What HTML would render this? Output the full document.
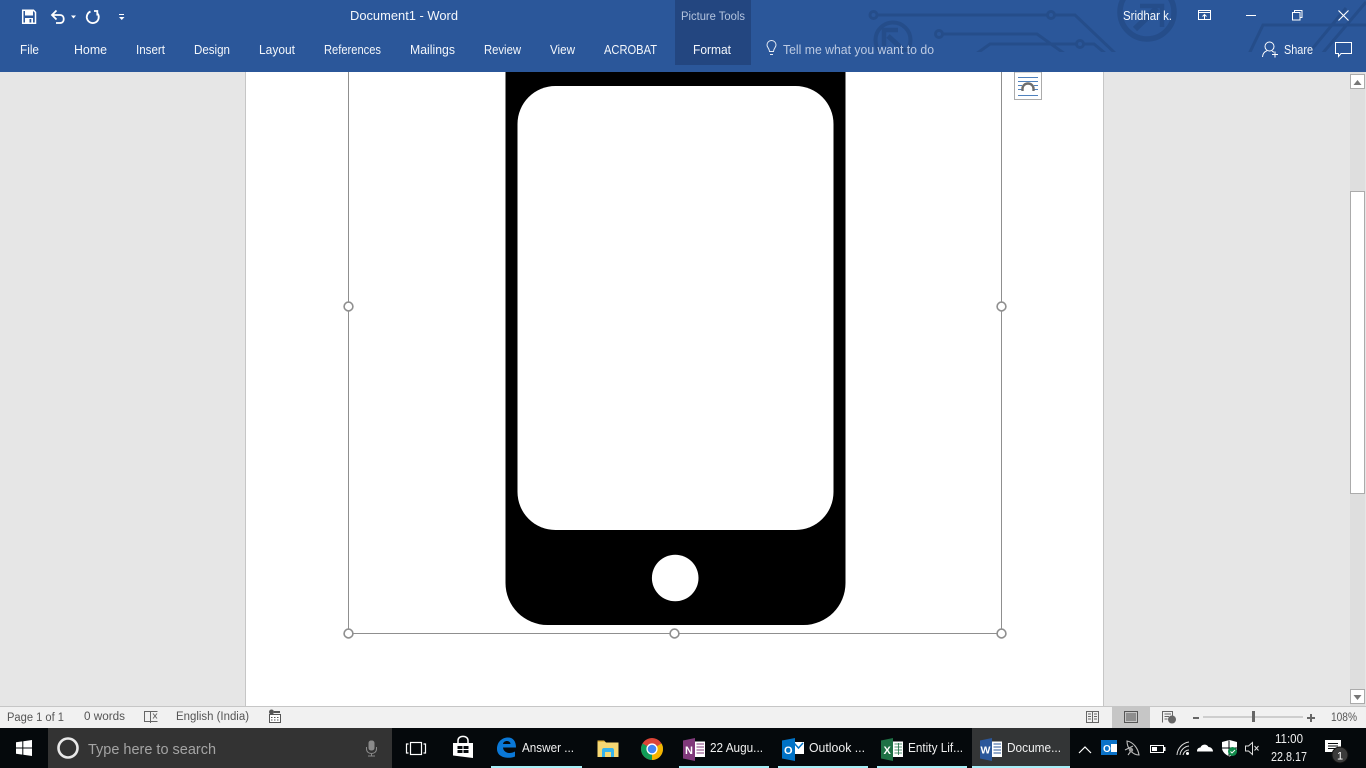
<!DOCTYPE html>
<html lang="en">
<head>
<meta charset="utf-8">
<title>Document1 - Word</title>
<style>
html,body{margin:0;padding:0;width:1366px;height:768px;overflow:hidden;background:#e6e6e6}
svg{display:block}
text{font-family:"Liberation Sans",sans-serif;font-size:12.5px}
.t{fill:#f4f7fb}
.s{fill:#555;font-size:11.5px}
.b{fill:#f0f0f0;font-size:13px}
</style>
</head>
<body>
<svg width="1366" height="768" viewBox="0 0 1366 768" xmlns="http://www.w3.org/2000/svg">
<defs>
<clipPath id="rb"><rect x="0" y="0" width="1366" height="52"/></clipPath>
<clipPath id="doc"><rect x="0" y="72" width="1366" height="634"/></clipPath>
</defs>

<!-- document area -->
<rect x="0" y="72" width="1366" height="635" fill="#e6e6e6"/>
<rect x="246" y="72" width="857" height="635" fill="#fff"/>
<rect x="245" y="72" width="1" height="635" fill="#c6c6c6"/>
<rect x="1103" y="72" width="1" height="635" fill="#c6c6c6"/>

<!-- scrollbar -->
<rect x="1350" y="72" width="15" height="634" fill="#dedede"/>
<rect x="1350.5" y="74.5" width="14" height="14" fill="#fff" stroke="#ababab"/>
<path d="M1353.5 85h8l-4-5z" fill="#777"/>
<rect x="1350.5" y="191.5" width="14" height="302" fill="#fff" stroke="#ababab"/>
<rect x="1350.5" y="689.5" width="14" height="14" fill="#fff" stroke="#ababab"/>
<path d="M1353.5 695h8l-4 5z" fill="#777"/>

<!-- phone image -->
<g clip-path="url(#doc)">
<rect x="505.5" y="20" width="340" height="605" rx="42" fill="#000"/>
<rect x="517.5" y="86" width="316" height="444" rx="38" fill="#fff"/>
<circle cx="675.2" cy="578" r="23.3" fill="#fff"/>
</g>

<!-- selection frame -->
<g fill="none" stroke="#8f8f8f" stroke-width="1">
<path d="M348.5 72V633.5H1001.5V72"/>
</g>
<g fill="#fff" stroke="#8f8f8f" stroke-width="1.6">
<circle cx="348.5" cy="306.5" r="4.4"/>
<circle cx="1001.5" cy="306.5" r="4.4"/>
<circle cx="348.5" cy="633.5" r="4.4"/>
<circle cx="674.5" cy="633.5" r="4.4"/>
<circle cx="1001.5" cy="633.5" r="4.4"/>
</g>

<!-- layout options button -->
<rect x="1014.5" y="72" width="27" height="27.5" fill="#fff" stroke="#ababab"/>
<g stroke="#4f81bd" stroke-width="1">
<path d="M1018 77.5h20M1018 81.500h20M1018 85.500h4M1034 85.500h4M1018 89.500h4M1034 89.500h4M1018 95.500h20"/>
</g>
<path d="M1022.500 91v-2.500a5.500 5 0 0 1 11 0V91" fill="none" stroke="#6e6e6e" stroke-width="2.400"/>

<!-- ribbon -->
<rect x="0" y="0" width="1366" height="72" fill="#2b579a"/>
<g clip-path="url(#rb)" fill="none" stroke="#254d8a" stroke-width="3">
<circle cx="873.500" cy="15" r="3.500"/>
<path d="M877 15H1047.500"/>
<circle cx="1051" cy="15" r="3.500"/>
<path d="M1054.500 15H1075L1117 55"/>
<circle cx="939" cy="34" r="3.500"/>
<path d="M942.500 34H1037L1065 54"/>
<path d="M976 54L990 44H1076.500"/>
<circle cx="1080" cy="44" r="3.500"/>
<path d="M1083.500 44H1094L1106 54"/>
<circle cx="893" cy="40" r="17.500" stroke-width="4"/>
<path d="M888 36L908 54" stroke-width="5"/>
<path d="M882 30H898M884 28V46" stroke-width="4.500"/>
<circle cx="1147" cy="12" r="27" stroke-width="5.500"/>
<path d="M1135 29L1157 8" stroke-width="6"/>
<path d="M1140 6H1162V27" stroke-width="4.500"/>
<path d="M1249 54L1263 25H1366" stroke-width="3"/>
<path d="M1308 54L1346 8" stroke-width="3"/>
<path d="M1322 54L1366 2" stroke-width="3"/>
</g>

<!-- Format tab -->
<rect x="675" y="0" width="76" height="65" fill="#234680"/>

<!-- QAT icons -->
<g fill="none" stroke="#fff">
<path d="M22.700 10.300H33.500L35.500 12.300V23.300H22.700Z" stroke-width="1.500"/>
<rect x="25" y="10.500" width="8" height="5" fill="#fff" stroke="none"/>
<rect x="25" y="18" width="8" height="5.500" fill="#fff" stroke="none"/>
<rect x="29.500" y="19" width="1.800" height="3.500" fill="#2b579a" stroke="none"/>
<path d="M52.500 15H60C65 15 65 23 60 23H56" stroke-width="1.800"/>
<path d="M56.500 10.500L52 15L56.500 19.500" stroke-width="1.800"/>
<path d="M90.500 11.500A6 6 0 1 0 97.800 13.800" stroke-width="1.800"/>
<path d="M94 11H97.300V15.500" stroke-width="1.800"/>
</g>
<path d="M71 15.500h5l-2.500 3z" fill="#fff"/>
<rect x="119" y="14" width="5" height="1" fill="#fff"/>
<path d="M119 17h5.500l-2.750 3z" fill="#fff"/>

<!-- Ribbon text -->
<text class="t" x="350" y="20" textLength="108" lengthAdjust="spacingAndGlyphs">Document1  -  Word</text>
<text x="681" y="20" textLength="64" lengthAdjust="spacingAndGlyphs" fill="#b4c4de" style="font-size:11.5px">Picture Tools</text>
<text class="t" x="1123" y="20" textLength="49" lengthAdjust="spacingAndGlyphs">Sridhar k.</text>
<text class="t" x="20" y="54" textLength="19" lengthAdjust="spacingAndGlyphs">File</text>
<text class="t" x="74" y="54" textLength="33" lengthAdjust="spacingAndGlyphs">Home</text>
<text class="t" x="136" y="54" textLength="29" lengthAdjust="spacingAndGlyphs">Insert</text>
<text class="t" x="194" y="54" textLength="36" lengthAdjust="spacingAndGlyphs">Design</text>
<text class="t" x="259" y="54" textLength="36" lengthAdjust="spacingAndGlyphs">Layout</text>
<text class="t" x="324" y="54" textLength="57" lengthAdjust="spacingAndGlyphs">References</text>
<text class="t" x="410" y="54" textLength="45" lengthAdjust="spacingAndGlyphs">Mailings</text>
<text class="t" x="484" y="54" textLength="37" lengthAdjust="spacingAndGlyphs">Review</text>
<text class="t" x="550" y="54" textLength="25" lengthAdjust="spacingAndGlyphs">View</text>
<text class="t" x="604" y="54" textLength="53" lengthAdjust="spacingAndGlyphs">ACROBAT</text>
<text class="t" x="693" y="54" textLength="38" lengthAdjust="spacingAndGlyphs">Format</text>
<text x="783" y="54" textLength="151" lengthAdjust="spacingAndGlyphs" fill="#bccae2">Tell me what you want to do</text>
<text class="t" x="1284" y="54" textLength="29" lengthAdjust="spacingAndGlyphs" style="font-size:13px">Share</text>

<!-- lightbulb -->
<g fill="none" stroke="#e4eaf4" stroke-width="1">
<path d="M769.500 51.500C769.500 48.500 767 47.500 767 45A4.500 4.500 0 0 1 776 45C776 47.500 773.500 48.500 773.500 51.500Z"/>
<path d="M770 54.500H773"/>
</g>

<!-- window controls -->
<g fill="none" stroke="#fff" stroke-width="1">
<rect x="1198.500" y="10.500" width="12" height="9"/>
<path d="M1198.500 12.500H1210.500"/>
<path d="M1204.500 19V14.500M1202.500 16.500L1204.500 14.500L1206.500 16.500"/>
<path d="M1246 15.500H1256"/>
<rect x="1292.500" y="12.500" width="7.500" height="7.500"/>
<path d="M1294.500 12V10.500H1302V17.500H1300.500"/>
<path d="M1338.500 10.500L1348.500 20.500M1348.500 10.500L1338.500 20.500" stroke-width="1.100"/>
<!-- share person -->
<circle cx="1269.500" cy="46.500" r="4.500"/>
<path d="M1262.500 57C1262.800 53 1265 51.500 1267 50.700"/>
<path d="M1272 51L1274 52.300"/>
<path d="M1272 54.500H1278M1275 51.500V57.500"/>
<!-- comment -->
<path d="M1335.500 42.500H1351.500V53.500H1341L1338.500 56.500V53.500H1335.500Z"/>
</g>

<!-- status bar -->
<rect x="0" y="706" width="1366" height="1" fill="#c6c6c6"/>
<rect x="0" y="707" width="1366" height="21" fill="#f1f1f1"/>
<rect x="1112" y="707" width="38" height="21" fill="#c6c6c6"/>
<text class="s" x="7" y="721" textLength="57" lengthAdjust="spacingAndGlyphs" fill="#444">Page 1 of 1</text>
<text class="s" x="84" y="720" textLength="41" lengthAdjust="spacingAndGlyphs">0 words</text>
<text class="s" x="176" y="720" textLength="73" lengthAdjust="spacingAndGlyphs">English (India)</text>
<text class="s" x="1331" y="721" textLength="26" lengthAdjust="spacingAndGlyphs">108%</text>

<!-- proofing icon -->
<g fill="none" stroke="#666" stroke-width="1">
<path d="M144.500 711.500H150.500V721.500H144.500Z"/>
<path d="M150.500 711.500V723"/>
<path d="M151 711.500H157.500M151 721.500H157.500"/>
<path d="M153 713.500L157 718.500M157 713.500L153 718.500"/>
</g>
<!-- macro icon -->
<circle cx="271.500" cy="712" r="2.500" fill="#555"/>
<path d="M274 711h6v2h-6z" fill="#555"/>
<rect x="269.500" y="714.500" width="11" height="8" fill="#fff" stroke="#555"/>
<path d="M271 717h1.500v1H271zM274 717h1.500v1H274zM277 717h1.500v1H277zM271 719.500h1.500v1H271zM274 719.500h1.500v1H274zM277 719.500h1.500v1H277z" fill="#555"/>

<!-- view icons -->
<g fill="none" stroke="#666" stroke-width="1">
<path d="M1086.500 711.500H1092.500V722.500H1086.500ZM1092.500 711.500H1098.500V722.500H1092.500Z"/>
<path d="M1088 714H1091M1088 716.500H1091M1088 719H1091M1094 714H1097M1094 716.500H1097M1094 719H1097"/>
<rect x="1124.500" y="711.500" width="13" height="11" stroke="#555"/>
<path d="M1126 714H1136M1126 716H1136M1126 718H1136M1126 720H1136" stroke="#555"/>
<path d="M1162.500 722.500V711.500H1172.500V716"/>
<path d="M1164.500 714H1171M1164.500 716.500H1169M1164.500 719H1167.500"/>
</g>
<circle cx="1172" cy="719.500" r="4" fill="#666"/>
<rect x="1193" y="717" width="6" height="2" fill="#666"/>
<rect x="1203" y="716.500" width="100" height="1" fill="#aaa"/>
<rect x="1252" y="711" width="3" height="11" fill="#666"/>
<rect x="1307" y="717" width="8" height="2" fill="#666"/>
<rect x="1310" y="714" width="2" height="8" fill="#666"/>

<!-- taskbar -->
<rect x="0" y="728" width="1366" height="40" fill="#05090c"/>
<rect x="48" y="728" width="344" height="40" fill="#333333"/>
<rect x="972" y="728" width="98" height="40" fill="#333536"/>

<!-- start -->
<path d="M16 742.300L22.300 741.400V747.500H16ZM23.300 741.200L32 740V747.500H23.300ZM16 748.500H22.300V754.600L16 753.700ZM23.300 748.500H32V756L23.300 754.800Z" fill="#fff"/>
<!-- cortana -->
<circle cx="68" cy="748" r="9.500" fill="none" stroke="#e8e8e8" stroke-width="2.600"/>
<text x="88" y="754" textLength="128" lengthAdjust="spacingAndGlyphs" fill="#a4a4a4" style="font-size:15px">Type here to search</text>
<!-- mic -->
<rect x="368.500" y="740.500" width="6" height="10" rx="2.500" fill="#8a8a8a"/>
<path d="M366.500 747V749C366.500 755 376.500 755 376.500 749V747M371.500 753V756M368 756H375" fill="none" stroke="#8a8a8a"/>
<!-- task view -->
<g fill="none" stroke="#fff" stroke-width="1.200">
<rect x="410.500" y="742.500" width="11" height="12"/>
<path d="M408.500 744H406.500V753H408.500M423.500 744H425.500V753H423.500"/>
</g>
<!-- store -->
<path d="M453 743H473V758L453 755.500Z" fill="#fff"/>
<path d="M458 743V740.500C458 735 468 735 468 740.500V743" fill="none" stroke="#fff" stroke-width="1.500"/>
<path d="M457.500 746H462.500V749H457.500ZM463.500 746H468.500V749H463.500ZM457.500 750H462.500V753H457.500ZM463.500 750H468.500V753H463.500Z" fill="#05090c"/>

<!-- edge -->
<path d="M497 749C497 741 503 737.500 508 737.500C513 737.500 516 741 516 747.500H503C503.500 753 510 754.500 515 751.500V756.500C508 759.500 497 757.500 497 749ZM503 744H510.500C510.500 740 503.500 740 503 744Z" fill="#0a78d7"/>
<text class="b" x="522" y="752" textLength="52" lengthAdjust="spacingAndGlyphs">Answer ...</text>

<!-- folder -->
<path d="M597.500 745V740.500H604L606 742.500H618.500V757H597.500Z" fill="#f6d773"/>
<path d="M597.500 740.500H604L605 742H597.500Z" fill="#e3b53f"/>
<path d="M602 757V750.500C602 748.500 603 748 604 748H612C613 748 614 748.500 614 750.500V757H611V752H605V757Z" fill="#36b3ec"/>

<!-- chrome -->
<circle cx="652" cy="749" r="11" fill="#db4437"/>
<path d="M652 749L642.500 743.500A11 11 0 0 0 646.500 758.500Z" fill="#0f9d58"/>
<path d="M652 749L646.500 758.500A11 11 0 0 0 661.500 743.500Z" fill="#0f9d58"/>
<path d="M652 749L661.500 743.500A11 11 0 0 1 652 760Z" fill="#f4b400"/>
<circle cx="652" cy="749" r="5.600" fill="#fff"/>
<circle cx="652" cy="749" r="4.300" fill="#4285f4"/>

<!-- onenote -->
<path d="M683 740.500L695 738V761L683 758.500Z" fill="#80397b"/>
<rect x="695" y="741.500" width="10" height="15.500" fill="#fff"/>
<path d="M696.500 744H704M696.500 747H704M696.500 750H704M696.500 753H704" stroke="#80397b"/>
<text x="685" y="754" fill="#fff" style="font-size:11px;font-weight:bold">N</text>
<text class="b" x="710" y="752" textLength="53" lengthAdjust="spacingAndGlyphs">22 Augu...</text>

<!-- outlook -->
<rect x="793" y="742" width="11" height="12" fill="#fff"/>
<path d="M794 743L798.500 748L803 743" fill="none" stroke="#0072c6" stroke-width="1.500"/>
<path d="M782 740.500L795 738V761L782 758.500Z" fill="#0072c6"/>
<text x="784" y="754" fill="#fff" style="font-size:11px;font-weight:bold">O</text>
<text class="b" x="809" y="752" textLength="56" lengthAdjust="spacingAndGlyphs">Outlook ...</text>

<!-- excel -->
<path d="M881 740.500L893 738V761L881 758.500Z" fill="#1e7145"/>
<rect x="893" y="741.500" width="10" height="15.500" fill="#fff"/>
<path d="M894.500 744H902M894.500 747H902M894.500 750H902M894.500 753H902M898.500 743V755" stroke="#1e7145" stroke-width="0.800"/>
<text x="883.500" y="754" fill="#fff" style="font-size:11px;font-weight:bold">X</text>
<text class="b" x="908" y="752" textLength="55" lengthAdjust="spacingAndGlyphs">Entity Lif...</text>

<!-- word -->
<path d="M980 740.500L992 738V761L980 758.500Z" fill="#2b579a"/>
<rect x="992" y="741.500" width="10" height="15.500" fill="#fff"/>
<path d="M993.500 744H1001M993.500 747H1001M993.500 750H1001M993.500 753H1001" stroke="#2b579a"/>
<text x="980.500" y="753.500" fill="#fff" style="font-size:10.500px;font-weight:bold">W</text>
<text class="b" x="1007" y="752" textLength="54" lengthAdjust="spacingAndGlyphs">Docume...</text>

<!-- running indicators -->
<g fill="#a6eef7">
<rect x="491" y="766" width="91" height="2"/>
<rect x="679" y="766" width="90" height="2"/>
<rect x="778" y="766" width="90" height="2"/>
<rect x="877" y="766" width="90" height="2"/>
<rect x="972" y="766" width="98" height="2"/>
</g>

<!-- tray -->
<path d="M1079 753L1085 747L1091 753" fill="none" stroke="#fff" stroke-width="1.200"/>
<rect x="1101" y="740" width="16" height="15" fill="#0a72c8"/>
<rect x="1111" y="744" width="6" height="8" fill="#fff"/>
<text x="1103" y="752" fill="#fff" style="font-size:10px;font-weight:bold">O</text>
<g fill="none" stroke="#bbb" stroke-width="1.100">
<path d="M1127 741C1133 742 1138 748 1139 755C1133 755 1127 749 1127 741Z"/>
<path d="M1125 750L1133 746M1128 755L1131 751"/>
</g>
<circle cx="1131" cy="750" r="2.200" fill="#999"/>
<rect x="1150.500" y="745.500" width="13" height="7" fill="none" stroke="#fff"/>
<rect x="1152" y="747" width="5" height="4" fill="#fff"/>
<rect x="1164" y="747" width="1.500" height="4" fill="#fff"/>
<g fill="none" stroke="#ddd" stroke-width="1">
<path d="M1177 755A14 14 0 0 1 1189 742"/>
<path d="M1180 755A10 10 0 0 1 1189 746"/>
<path d="M1183 755A6 6 0 0 1 1189 750"/>
</g>
<circle cx="1187.500" cy="753.500" r="1.500" fill="#fff"/>
<path d="M1197 751C1197 748 1199.500 747.500 1200.500 747.500C1201.500 744 1207 743.500 1208.500 747C1211 747 1213 749 1213 751.500H1197Z" fill="#fff"/>
<path d="M1222 742L1229.500 740L1237 742V748C1237 752 1233 755 1229.500 756.500C1226 755 1222 752 1222 748Z" fill="#fff"/>
<path d="M1229 740.500V756M1222 748H1237" stroke="#05090c"/>
<circle cx="1232.500" cy="751.500" r="4.500" fill="#108a4a"/>
<path d="M1230.500 751.500L1232 753L1235 750" fill="none" stroke="#fff" stroke-width="0.900"/>
<path d="M1245.500 746H1248.500L1252.500 742.500V754.500L1248.500 751H1245.500Z" fill="none" stroke="#ddd"/>
<path d="M1254.500 746L1258.500 750.500M1258.500 746L1254.500 750.500" stroke="#ddd" fill="none"/>
<text x="1275" y="743" textLength="28" lengthAdjust="spacingAndGlyphs" fill="#f0f0f0">11:00</text>
<text x="1271" y="761" textLength="36" lengthAdjust="spacingAndGlyphs" fill="#f0f0f0">22.8.17</text>
<path d="M1325 740H1341V752H1336L1333 755V752H1325Z" fill="#fff"/>
<path d="M1328 743.500H1338M1328 746H1338M1328 748.500H1335" stroke="#05090c"/>
<circle cx="1340" cy="755" r="8" fill="#3b3b3b" stroke="#111"/>
<text x="1337" y="759.500" fill="#fff" style="font-size:11px">1</text>
</svg>
</body>
</html>
